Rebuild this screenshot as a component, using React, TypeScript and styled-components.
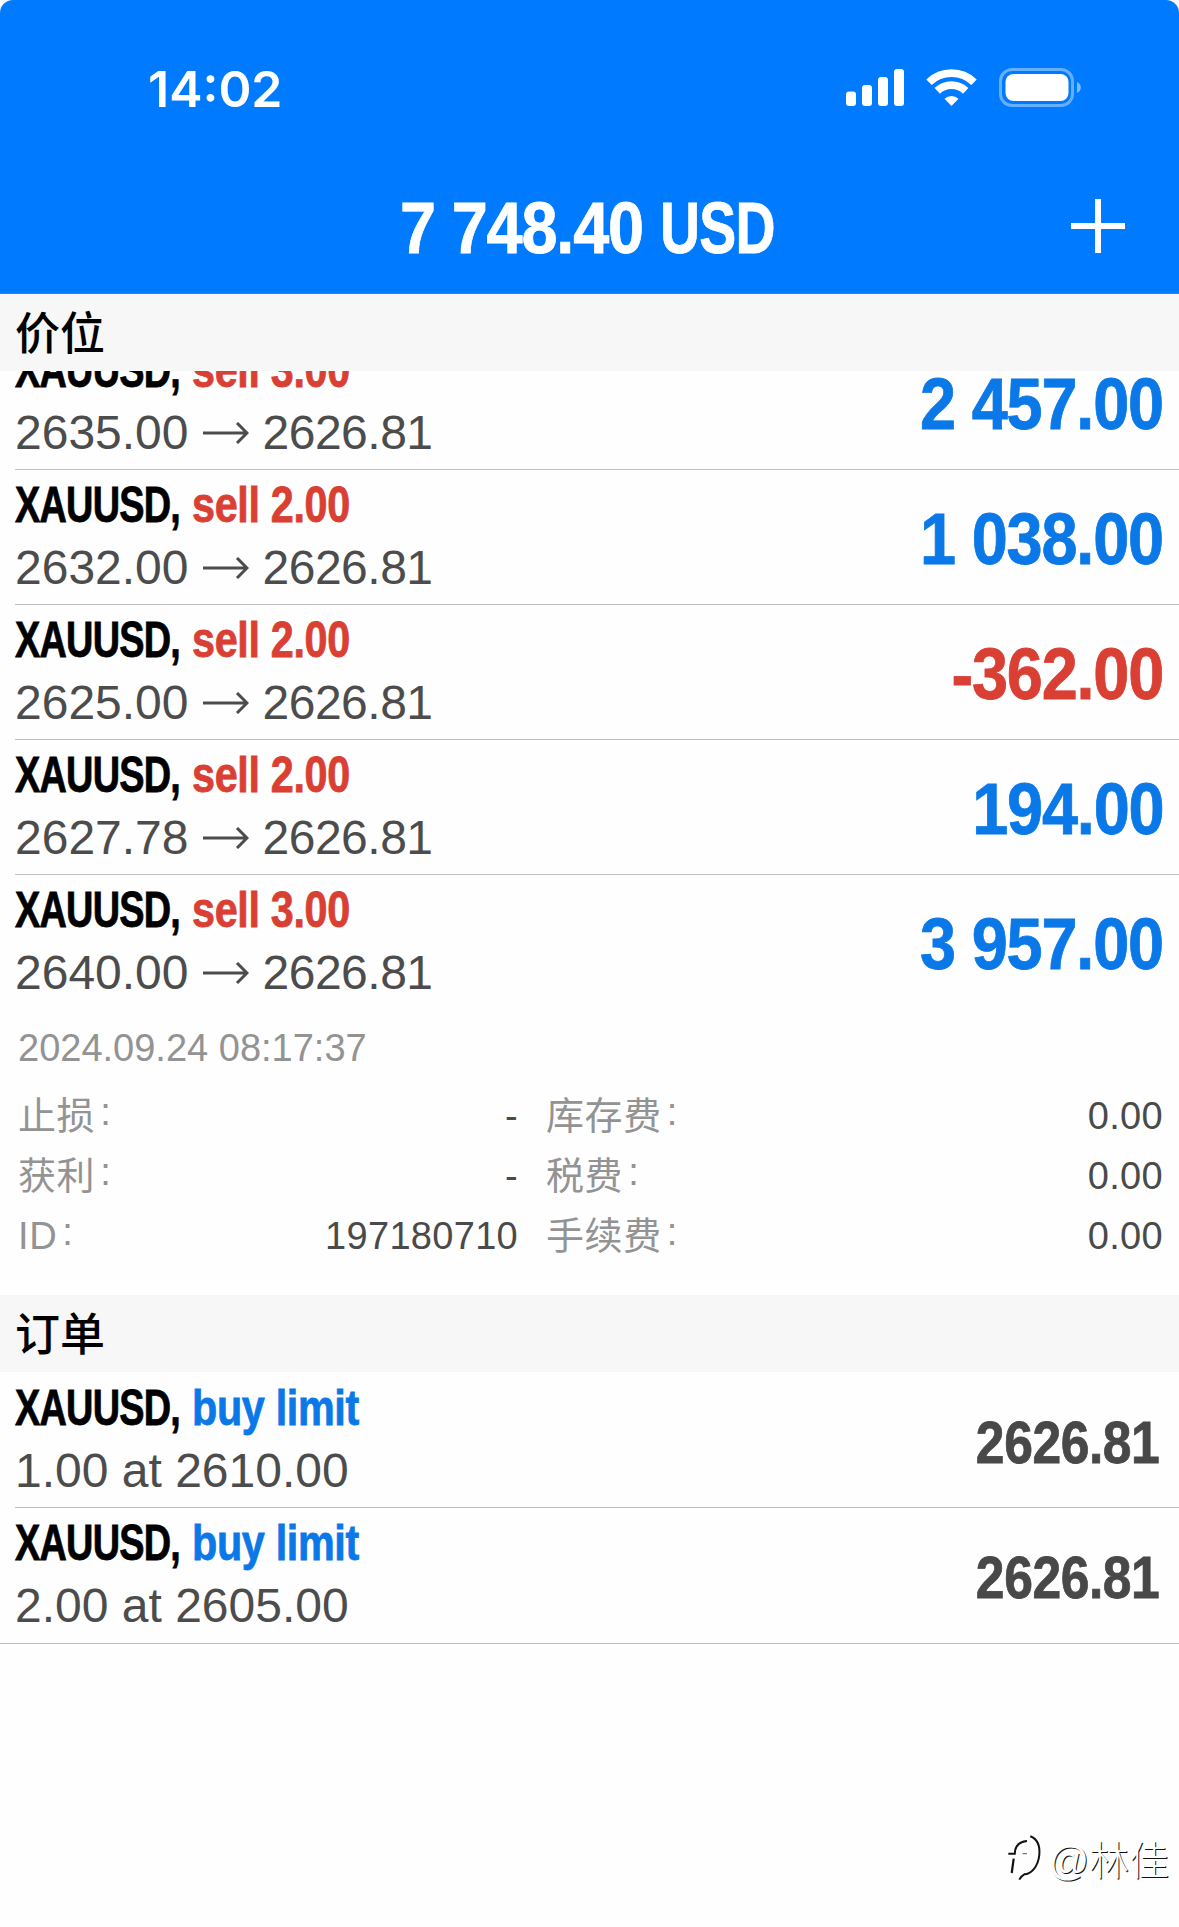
import styled, { createGlobalStyle } from "styled-components";

const GlobalStyle = createGlobalStyle`
  * {
    box-sizing: border-box;
  }
  body {
    margin: 0;
    background: #fefefe;
    font-family: "Liberation Sans", "Noto Sans CJK SC", sans-serif;
  }
`;

const BLUE = "#0b78e8";
const RED = "#d93f33";

const Screen = styled.main`
  display: flex;
  flex-direction: column;
  width: 1179px;
  height: 1927px;
  overflow: hidden;
`;

const Header = styled.header`
  flex: none;
  height: 294px;
  background: #007aff;
  border-bottom: 1px solid #3a86cc;
  border-radius: 13px 13px 0 0;
  color: white;
`;

const StatusBar = styled.div`
  display: flex;
  align-items: center;
  justify-content: space-between;
  height: 176px;
  padding: 0 97px 0 148px;
`;

const Clock = styled.time`
  padding-top: 1px;
  font-family: Inter, sans-serif;
  font-size: 50px;
  font-weight: 600;
  line-height: 60px;
`;

const TitleBar = styled.div`
  display: grid;
  grid-template-columns: 1fr auto 1fr;
  align-items: center;
  height: 100px;
  padding: 0 54px 0 54px;
`;

const Balance = styled.h1`
  grid-column: 2;
  display: flex;
  width: 380px;
  margin: 4px 0 0;
  font-size: 72px;
  line-height: 80px;
  white-space: pre;
`;

// Condensed bold face: squeezed horizontally, origin keeps the anchored edge in place
const Condensed = styled.span<{
  $scale: number;
  $spacing: number;
  $width?: number;
  $right?: boolean;
  $color?: string;
}>`
  display: block;
  flex: none;
  width: ${(p) => (p.$width ? `${p.$width}px` : "auto")};
  color: ${(p) => p.$color ?? "inherit"};
  font-weight: bold;
  letter-spacing: ${(p) => p.$spacing}px;
  white-space: pre;
  transform: scaleX(${(p) => p.$scale});
  transform-origin: ${(p) => (p.$right ? "right" : "left")} center;
  -webkit-text-stroke: 0.8px currentColor;
`;

const AddButton = styled.button`
  grid-column: 3;
  justify-self: end;
  display: flex;
  padding: 0;
  border: 0;
  background: none;
`;

const SectionTitle = styled.h2`
  flex: none;
  height: 77px;
  margin: 0;
  padding-left: 15px;
  background: #f7f7f7;
  color: black;
  font-family: "Noto Sans CJK SC", sans-serif;
  font-size: 45px;
  font-weight: 500;
  line-height: 74px;
`;

// The list is scrolled a little under the section title
const Positions = styled.div`
  flex: none;
  display: flex;
  flex-direction: column;
  justify-content: flex-end;
  height: 638px;
  overflow: hidden;
`;

const Row = styled.div`
  flex: none;
  display: flex;
  justify-content: space-between;
  height: 135px;
  margin-left: 15px;
  padding-right: 16px;
  border-bottom: 1px solid #c0c0c0;

  ${Positions} &:last-child {
    height: 134px;
    border-bottom: 0;
  }
`;

const OrderList = styled.div`
  flex: none;
  padding-top: 1px;
  border-bottom: 1px solid #c0c0c0;

  ${Row}:last-child {
    border-bottom: 0;
  }
`;

const RowInfo = styled.div`
  padding-top: 5px;
`;

const RowTitle = styled.div`
  display: flex;
  font-size: 49.5px;
  line-height: 60px;
`;

const Prices = styled.div`
  display: flex;
  align-items: center;
  color: #4c4c4c;
  font-size: 48px;
  line-height: 66px;
`;

const Arrow = styled.svg`
  flex: none;
  margin: 0 14px 0 14px;
`;

const CurrentPrice = styled.span`
  letter-spacing: -0.5px;
`;

const Profit = styled.div<{ $color: string }>`
  padding-top: 29px;
  color: ${(p) => p.$color};
  font-size: 72px;
  line-height: 80px;
`;

const Quote = styled.div`
  padding: 30px 4px 0 0;
  color: #484848;
  font-size: 60px;
  line-height: 80px;
`;

const Opened = styled.div`
  flex: none;
  height: 76px;
  padding-left: 18px;
  color: #939393;
  font-size: 38px;
  line-height: 78px;
`;

const Details = styled.dl`
  flex: none;
  display: grid;
  grid-template-columns: 500px 617px;
  column-gap: 28px;
  margin: 0;
  padding: 0 15px 30px 18px;
  font-size: 38px;
  line-height: 62px;
`;

const Detail = styled.div`
  display: flex;
  justify-content: space-between;
  height: 60px;
`;

const Label = styled.dt`
  color: #939393;
  letter-spacing: 0.6px;
`;

const Colon = styled.span`
  margin-left: 5px;
  line-height: 1;
  vertical-align: 4px;
`;

const Value = styled.dd`
  margin: 0;
  color: #4a4a4a;
  letter-spacing: 0.3px;
`;

const Watermark = styled.div`
  display: flex;
  justify-content: flex-end;
  align-items: center;
  gap: 5px;
  margin: auto 0 4px;
  height: 130px;
  padding-right: 10px;
  color: white;
  font-size: 40px;
  font-weight: 300;
  text-shadow: 1px 1px 0 #111;
`;

const positions = [
  { volume: "3.00", open: "2635.00", profit: "2 457.00" },
  { volume: "2.00", open: "2632.00", profit: "1 038.00" },
  { volume: "2.00", open: "2625.00", profit: "-362.00" },
  { volume: "2.00", open: "2627.78", profit: "194.00" },
  { volume: "3.00", open: "2640.00", profit: "3 957.00" },
];

const orders = ["1.00 at 2610.00", "2.00 at 2605.00"];

const details = [
  ["止损", "-"],
  ["库存费", "0.00"],
  ["获利", "-"],
  ["税费", "0.00"],
  ["ID", "197180710"],
  ["手续费", "0.00"],
];

function StatusIcons() {
  return (
    <svg width="236" height="40" viewBox="0 0 236 40" fill="white">
      <rect x="0" y="23.5" width="10" height="14.5" rx="3" />
      <rect x="16" y="17" width="10" height="21" rx="3" />
      <rect x="32" y="9" width="10" height="29" rx="3" />
      <rect x="48" y="1" width="10" height="37" rx="3" />
      <g fill="none" stroke="white" strokeWidth="7.8">
        <path d="M83 14.2a32.5 32.5 0 0 1 45 0" />
        <path d="M91.3 22.9a20.5 20.5 0 0 1 28.4 0" />
      </g>
      <path d="M105.5 38l-7-7.2a10.2 10.2 0 0 1 14 0z" />
      <rect x="154.5" y="1.5" width="72" height="36" rx="11.5" fill="none" stroke="white" strokeOpacity="0.4" strokeWidth="3" />
      <rect x="159.5" y="6" width="63" height="27" rx="8" />
      <path d="M231 14v11c5-2 5-9 0-11z" fillOpacity="0.5" />
    </svg>
  );
}

function Title({ action, color }: { action: string; color: string }) {
  return (
    <RowTitle>
      <Condensed $color="black" $scale={0.765} $spacing={-1} $width={177}>
        XAUUSD,
      </Condensed>
      <Condensed $color={color} $scale={0.835} $spacing={-0.4}>
        {action}
      </Condensed>
    </RowTitle>
  );
}

export default function App() {
  return (
    <Screen>
      <GlobalStyle />
      <Header>
        <StatusBar>
          <Clock>14:02</Clock>
          <StatusIcons />
        </StatusBar>
        <TitleBar>
          <Balance>
            <Condensed $scale={0.9} $spacing={-1.3} $width={260}>
              7 748.40
            </Condensed>
            <Condensed $scale={0.77} $spacing={-1}>
              USD
            </Condensed>
          </Balance>
          <AddButton aria-label="add">
            <svg width="54" height="54" viewBox="0 0 54 54" fill="none" stroke="white" strokeWidth="6">
              <path d="M0 27h54M27 0v54" />
            </svg>
          </AddButton>
        </TitleBar>
      </Header>

      <SectionTitle>价位</SectionTitle>
      <Positions>
        {positions.map((p) => (
          <Row key={p.open}>
            <RowInfo>
              <Title action={`sell ${p.volume}`} color={RED} />
              <Prices>
                {p.open}
                <Arrow width="46" height="22" viewBox="0 0 46 22" fill="none" stroke="#4c4c4c" strokeWidth="3">
                  <path d="M0 11h44M34 1l10 10-10 10" />
                </Arrow>
                <CurrentPrice>2626.81</CurrentPrice>
              </Prices>
            </RowInfo>
            <Profit $color={p.profit.startsWith("-") ? RED : BLUE}>
              <Condensed $scale={0.9} $spacing={-1.3} $right>
                {p.profit}
              </Condensed>
            </Profit>
          </Row>
        ))}
      </Positions>
      <Opened>2024.09.24 08:17:37</Opened>
      <Details>
        {details.map(([label, value]) => (
          <Detail key={label}>
            <Label>
              {label}
              <Colon>:</Colon>
            </Label>
            <Value>{value}</Value>
          </Detail>
        ))}
      </Details>

      <SectionTitle>订单</SectionTitle>
      <OrderList>
        {orders.map((order) => (
          <Row key={order}>
            <RowInfo>
              <Title action="buy limit" color={BLUE} />
              <Prices>{order}</Prices>
            </RowInfo>
            <Quote>
              <Condensed $scale={0.86} $spacing={-0.5} $right>
                2626.81
              </Condensed>
            </Quote>
          </Row>
        ))}
      </OrderList>

      <Watermark>
        <svg width="36" height="46" viewBox="0 0 36 46" fill="none" stroke="#111">
          <path d="M1.3 18.7h6.5c.2-7 4-12 12.2-12.7" strokeWidth="2" />
          <path d="M23.3 1.3c8 3 9.7 10.7 9 18.7-1.3 12-8.3 19-15 19.3q-3.3 1.7-5 5.4" strokeWidth="2" />
          <path d="M6.7 23.7l-2 14.3" strokeWidth="2.2" />
          <path d="M15.5 18.7h4.5" strokeWidth="0.7" />
        </svg>
        @林佳
      </Watermark>
    </Screen>
  );
}
